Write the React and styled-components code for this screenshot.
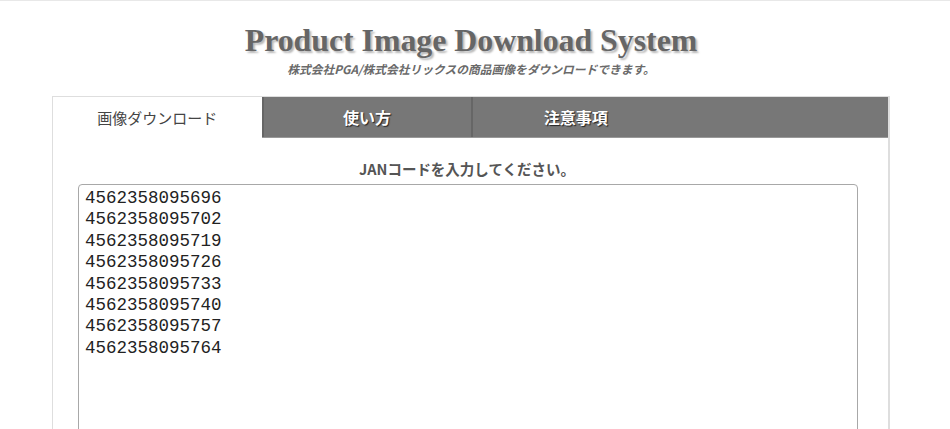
import React, { useEffect, useRef } from "react";
import styled, { createGlobalStyle } from "styled-components";

const GlobalStyle = createGlobalStyle`
  html, body {
    margin: 0;
    padding: 0;
    background: #fff;
  }
  body {
    border-top: 1px solid #e8e8e8;
    font-family: "Noto Sans CJK JP", "Noto Sans", sans-serif;
    color: #555;
    overflow: hidden;
  }
`;

const Page = styled.div`
  padding-right: 8px;
`;

const Container = styled.div`
  width: 838px;
  margin: 0 auto;
`;

const Header = styled.header`
  text-align: center;
  padding-top: 23px;

  h1 {
    margin: 0;
    font-family: "Liberation Serif", "Times New Roman", serif;
    font-size: 31.8px;
    line-height: 33px;
    font-weight: 700;
    color: #666;
    text-shadow: 2px 2px 2px #b8b8b8;
  }

  p {
    margin: 5px 0 0;
    font-size: 11.75px;
    line-height: 14px;
    font-weight: 700;
    font-style: italic;
    color: #6a6a6a;
  }
`;

const Panel = styled.section`
  margin-top: 20px;
  border: 1px solid #dedede;
  border-right-width: 2px;
  border-bottom: none;
  background: #fff;
`;

const TabBar = styled.nav`
  display: flex;
  height: 40px;
  background: #777;
  border-bottom: 1px solid #999;
`;

const Tab = styled.div`
  box-sizing: border-box;
  width: 25%;
  display: flex;
  align-items: center;
  justify-content: center;
  font-size: ${(p) => (p.$active ? "15px" : "16px")};
  background: ${(p) => (p.$active ? "#fff" : "#777")};
  color: ${(p) => (p.$active ? "#444" : "#fff")};
  font-weight: ${(p) => (p.$active ? 400 : 700)};
  text-shadow: ${(p) => (p.$active ? "none" : "1px 1px 1px #222")};
  border-left: ${(p) => (p.$active ? "none" : "2px solid #666")};
  margin-bottom: ${(p) => (p.$active ? "-1px" : "0")};
`;

const Body = styled.div`
  padding: 21px 32px 0 25px;
`;

const Label = styled.h2`
  margin: 0 0 5px;
  text-align: center;
  font-size: 14.5px;
  line-height: 20px;
  font-weight: 700;
  color: #555;
`;

const CodeInput = styled.textarea`
  display: block;
  box-sizing: border-box;
  width: 780px;
  height: 300px;
  margin: 0;
  padding: 3px 6px;
  border: 1px solid #a8a8a8;
  border-radius: 4px;
  resize: none;
  outline: none;
  font-family: "Liberation Mono", "Courier New", monospace;
  font-size: 17.5px;
  line-height: 21.4px;
  color: #222;
  caret-color: #000;
`;

const codes = [
  "4562358095696",
  "4562358095702",
  "4562358095719",
  "4562358095726",
  "4562358095733",
  "4562358095740",
  "4562358095757",
  "4562358095764",
].join("\n");

const App = () => {
  const inputRef = useRef(null);

  useEffect(() => {
    const el = inputRef.current;
    if (el) {
      el.focus();
      el.setSelectionRange(el.value.length, el.value.length);
    }
  }, []);

  return (
    <>
      <GlobalStyle />
      <Page>
        <Container>
          <Header>
            <h1>Product Image Download System</h1>
            <p>株式会社PGA/株式会社リックスの商品画像をダウンロードできます。</p>
          </Header>
          <Panel>
            <TabBar>
              <Tab $active>画像ダウンロード</Tab>
              <Tab>使い方</Tab>
              <Tab>注意事項</Tab>
            </TabBar>
            <Body>
              <Label>JANコードを入力してください。</Label>
              <CodeInput ref={inputRef} defaultValue={codes} spellCheck={false} />
            </Body>
          </Panel>
        </Container>
      </Page>
    </>
  );
};

export default App;
